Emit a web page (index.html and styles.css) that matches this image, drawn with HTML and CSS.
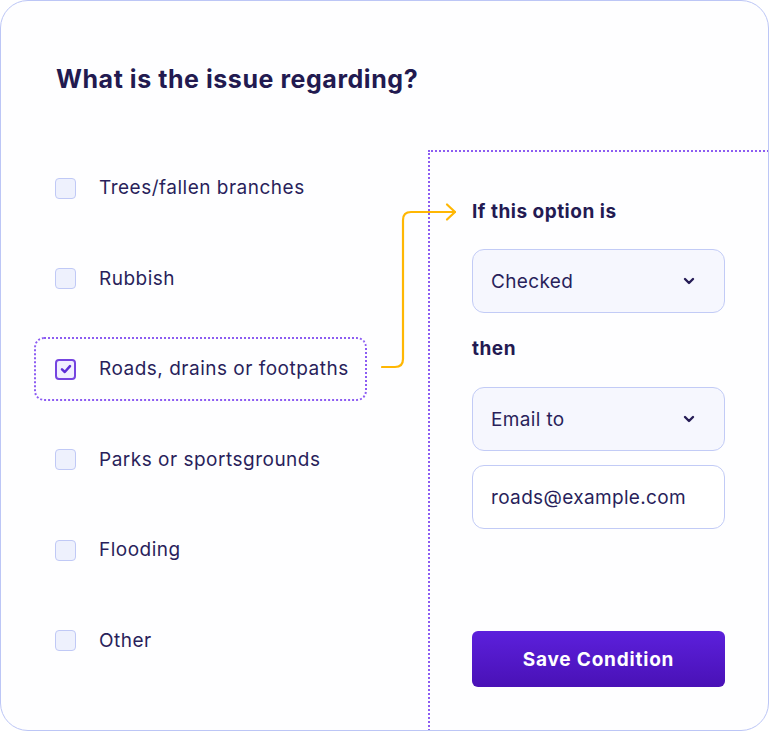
FILE: index.html
```html
<!DOCTYPE html>
<html>
<head>
<meta charset="utf-8">
<link rel="stylesheet" href="styles.css">
</head>
<body>
<div class="card">
  <h1 class="title">What is the issue regarding?</h1>
  <div class="body">
    <div class="options">
      <div class="option"><span class="box"></span><span class="label">Trees/fallen branches</span></div>
      <div class="option"><span class="box"></span><span class="label">Rubbish</span></div>
      <div class="option selected"><span class="box checked"><svg viewBox="0 0 12 12" width="12" height="12"><path d="M2 6.4 L4.8 9 L10 3.2" fill="none" stroke="#5d2ed6" stroke-width="2.5" stroke-linecap="round" stroke-linejoin="round"/></svg></span><span class="label">Roads, drains or footpaths</span></div>
      <div class="option"><span class="box"></span><span class="label">Parks or sportsgrounds</span></div>
      <div class="option"><span class="box"></span><span class="label">Flooding</span></div>
      <div class="option"><span class="box"></span><span class="label">Other</span></div>
    </div>
    <div class="panel">
      <div class="plabel">If this option is</div>
      <div class="field select"><span>Checked</span><svg class="chev" viewBox="0 0 12 8" width="12" height="8"><path d="M2 2 L6 6 L10 2" fill="none" stroke="#261c56" stroke-width="2.4" stroke-linecap="round" stroke-linejoin="round"/></svg></div>
      <div class="plabel then">then</div>
      <div class="field select"><span>Email to</span><svg class="chev" viewBox="0 0 12 8" width="12" height="8"><path d="M2 2 L6 6 L10 2" fill="none" stroke="#261c56" stroke-width="2.4" stroke-linecap="round" stroke-linejoin="round"/></svg></div>
      <div class="field input"><span>roads@example.com</span></div>
      <button class="save">Save Condition</button>
    </div>
    <svg class="connector" width="90" height="230" viewBox="0 0 90 230">
      <path d="M1 217 L14 217 Q22 217 22 209 L22 70 Q22 62 30 62 L74 62" fill="none" stroke="#ffb703" stroke-width="2.2" stroke-linecap="round"/>
      <path d="M66 54.5 L74 62 L66 69.5" fill="none" stroke="#ffb703" stroke-width="2.2" stroke-linecap="round" stroke-linejoin="round"/>
    </svg>
  </div>
</div>
</body>
</html>
```
FILE: styles.css
```css
* { box-sizing: border-box; }
html, body { margin: 0; padding: 0; background: #ffffff; }
body { font-family: Inter, "Noto Sans", sans-serif; color: #271f57; }

.card {
  width: 769px;
  height: 731px;
  border: 1.5px solid #bcc6f6;
  border-radius: 28px;
  overflow: hidden;
  background: #fefeff;
}

.title {
  margin: 0;
  padding: 62px 0 0 55px;
  height: 149px;
  font-size: 25px;
  line-height: 32px;
  font-weight: 700;
  color: #221a50;
  letter-spacing: 0.55px;
}

.body {
  position: relative;
  display: flex;
  align-items: flex-start;
}

.options {
  width: 427px;
  flex: none;
  padding: 6px 0 0 33px;
  display: flex;
  flex-direction: column;
  gap: 26.6px;
}

.option {
  width: 333px;
  height: 64px;
  display: flex;
  align-items: center;
  gap: 23px;
  padding-left: 19px;
  border: 2px dotted transparent;
  border-radius: 10px;
}
.option.selected { border-color: #8c5cf2; }

.box {
  width: 21px;
  height: 21px;
  flex: none;
  border: 1.5px solid #c0c9f6;
  background: #eef1fd;
  border-radius: 4px;
  display: flex;
  align-items: center;
  justify-content: center;
}
.box.checked { border: 2px solid #7544e0; background: #f1efff; }

.label { font-size: 19px; line-height: 24px; color: #291f5b; letter-spacing: 0.5px; }

.panel {
  flex: 1;
  height: 700px;
  margin-right: -40px;
  border-top: 2px dotted #8c5cf2;
  border-left: 2px dotted #8c5cf2;
  padding: 48px 0 0 42px;
  display: flex;
  flex-direction: column;
}

.plabel { font-size: 19px; line-height: 24px; font-weight: 700; color: #231a52; letter-spacing: 0.5px; }
.plabel.then { margin-top: 24px; }

.field {
  width: 253px;
  height: 64px;
  border: 1.5px solid #c2cbf6;
  border-radius: 12px;
  display: flex;
  align-items: center;
  justify-content: space-between;
  padding: 0 29px 0 18px;
  font-size: 19px;
  color: #291f5b;
  letter-spacing: 0.35px;
}
.select { background: #f6f7fe; }
.panel .plabel + .select { margin-top: 25px; }
.then + .select { margin-top: 26px !important; }
.input { background: #ffffff; margin-top: 14px; }
.chev { display: block; }

.save {
  margin-top: 102px;
  width: 253px;
  height: 56px;
  border: none;
  border-radius: 6px;
  background: linear-gradient(180deg, #5c20dc 0%, #4911b6 100%);
  color: #ffffff;
  font-family: Inter, "Noto Sans", sans-serif;
  font-size: 19px;
  font-weight: 700;
  letter-spacing: 0.8px;
}

.connector {
  position: absolute;
  left: 380px;
  top: 0;
  pointer-events: none;
}
```
